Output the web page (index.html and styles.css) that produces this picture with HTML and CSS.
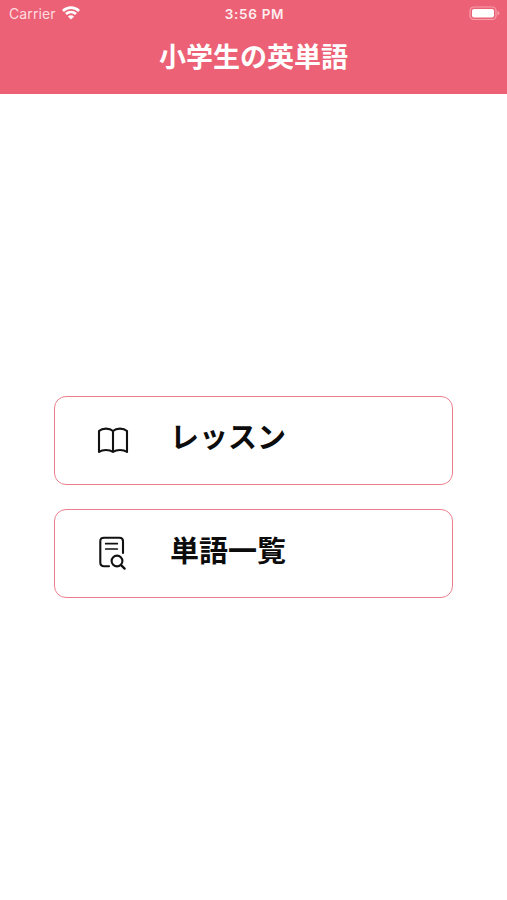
FILE: index.html
```html
<!DOCTYPE html>
<html lang="ja">
<head>
<meta charset="utf-8">
<title>小学生の英単語</title>
<link rel="stylesheet" href="styles.css">
</head>
<body>
<header class="header">
  <div class="status">
    <div class="carrier">
      <span class="carrier-name">Carrier</span>
      <svg class="wifi" width="18" height="14" viewBox="0 0 18 14" fill="none" stroke="#fff" stroke-width="2.8">
        <path d="M.9 5C5.5.4 12.5.4 17.1 5M4 8.1C6.9 5.4 11.1 5.4 14 8.1"/>
        <path d="M5.9 10.5C7.7 8.8 10.3 8.8 12.1 10.5L9 13.6Z" fill="#fff" stroke="none"/>
      </svg>
    </div>
    <time class="clock">3:56 PM</time>
    <div class="power">
      <svg class="battery" width="31" height="15" viewBox="0 0 31 15">
        <rect x="1" y="1" width="26" height="12.5" rx="3.8" fill="none" stroke="#f6a0ac" stroke-width="1.2"/>
        <rect x="3" y="3" width="22" height="8.5" rx="2" fill="#fff"/>
        <path d="M28.5 5Q30.3 5.6 30.3 7.2T28.5 9.5Z" fill="#f6a0ac"/>
      </svg>
    </div>
  </div>
  <h1 class="title">小学生の英単語</h1>
</header>
<main class="menu">
  <a class="card">
    <svg class="icon" width="34" height="36" viewBox="0 0 34 36" fill="none" stroke="#111" stroke-width="2.1" stroke-linejoin="round" stroke-linecap="round">
      <path d="M17 8C13.5 4.8 6.5 4.8 3 8V29C6.5 26.4 13.5 26.4 17 29C20.5 26.4 27.5 26.4 31 29V8C27.5 4.8 20.5 4.8 17 8ZM17 8V29"/>
    </svg>
    <span class="label label-kana">レッスン</span>
  </a>
  <a class="card">
    <svg class="icon" width="34" height="36" viewBox="0 0 34 36" fill="none" stroke="#111" stroke-width="2.1" stroke-linejoin="round" stroke-linecap="round">
      <path d="M13 30.2H8Q4.3 30.2 4.3 26.5V5.2Q4.3 1.7 8 1.7H23.5Q27 1.7 27 5.2V17"/>
      <path d="M9.7 7.7H21.3M9.7 13H21.3" stroke-width="1.7"/>
      <circle cx="21" cy="25" r="5.4"/>
      <path d="M25.1 29.2L28.6 32.6" stroke-width="2.4"/>
    </svg>
    <span class="label">単語一覧</span>
  </a>
</main>
</body>
</html>
```
FILE: styles.css
```css
body {
  margin: 0;
  height: 900px;
  display: flex;
  flex-direction: column;
  background: #fff;
  font-family: "Noto Sans CJK JP", sans-serif;
}
.header {
  height: 94px;
  background: #ec6175;
  color: #fff;
}
.status {
  height: 28px;
  padding: 0 7px 0 9px;
  display: grid;
  grid-template-columns: 1fr auto 1fr;
  align-items: center;
  font: 14px/28px Inter, sans-serif;
}
.carrier {
  display: flex;
  align-items: center;
  gap: 6px;
}
.carrier-name {
  color: #ffdce0;
  letter-spacing: 0.1px;
}
.wifi {
  margin-top: -2px;
}
.clock {
  font-size: 13.5px;
  font-weight: 600;
  letter-spacing: 0.7px;
  color: #ffeef0;
}
.power {
  display: flex;
  justify-content: flex-end;
}
.battery {
  margin-top: -2px;
}
.title {
  margin: 7px 0 0;
  font-size: 27px;
  line-height: 42px;
  font-weight: 700;
  text-align: center;
}
.menu {
  margin-top: 302px;
  padding: 0 54px;
  display: flex;
  flex-direction: column;
  gap: 24px;
}
.card {
  box-sizing: border-box;
  height: 89px;
  padding: 0 41px;
  display: flex;
  align-items: center;
  gap: 40px;
  border: 1.5px solid #ec7f8e;
  border-radius: 12px;
}
.icon {
  flex: none;
}
.label {
  margin-top: -9px;
  font-size: 29px;
  line-height: 42px;
  font-weight: 700;
  color: #0c0c0c;
}
.label-kana {
  margin-top: -11px;
}
```
